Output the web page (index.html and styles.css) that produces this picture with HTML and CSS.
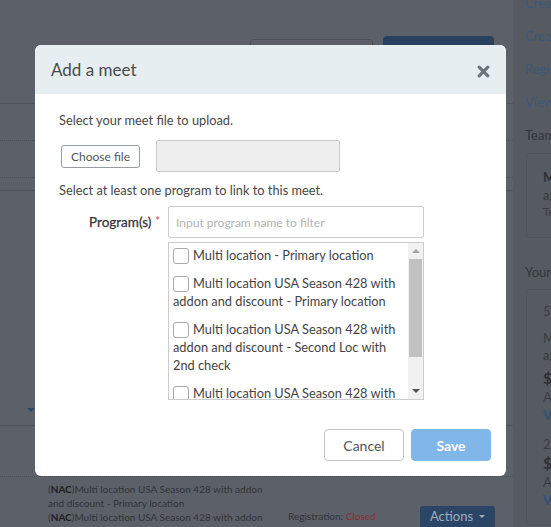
FILE: index.html
```html
<!DOCTYPE html>
<html lang="en">
<head>
<meta charset="utf-8">
<title>Add a meet</title>
<link rel="stylesheet" href="styles.css">
</head>
<body>
<div class="page">
  <main class="main">
    <div class="toolbar">
      <span class="bg-btn-outline"></span>
      <span class="bg-btn-primary"></span>
    </div>
    <div class="row row-a"></div>
    <div class="row row-b"></div>
    <div class="row row-c"></div>
    <div class="row row-d"><span class="bg-caret"></span></div>
    <div class="row row-e"></div>
    <div class="meets">
      <div class="meet-names">
        <p class="meet-name">(<b>NAC</b>)Multi location USA Season 428 with addon and discount - Primary location</p>
        <p class="meet-name">(<b>NAC</b>)Multi location USA Season 428 with addon and discount - Second Loc with 2nd check</p>
      </div>
      <div class="meet-status">Registration: <span class="closed">Closed</span><br>Billing: 4/28/2019</div>
      <div class="bg-actions">Actions <span class="bg-actions-caret"></span></div>
    </div>
  </main>
  <aside class="sidebar">
    <ul class="side-links">
      <li>Create meet</li>
      <li>Create team</li>
      <li>Register swimmers</li>
      <li>View all meets</li>
    </ul>
    <div class="side-title">Team(s)</div>
    <div class="side-card card-team">
      <div class="st-bold">Multi location</div>
      <div class="st-line">age group swim team</div>
      <div class="st-small">Team code: MLT</div>
    </div>
    <div class="side-title side-title-2">Your registrations</div>
    <div class="side-card card-reg">
      <div class="sr-date">5/1/2019</div>
      <div class="sr-line">Multi location USA Season</div>
      <div class="sr-line">age group meet</div>
      <div class="sr-amount">$150.00</div>
      <div class="sr-muted">Amount due</div>
      <div class="sr-link">View</div>
      <div class="sr-date sr-date-2">2nd session</div>
      <div class="sr-amount sr-amount-2">$100.00</div>
      <div class="sr-muted">Amount due</div>
      <div class="sr-link">View</div>
    </div>
  </aside>
</div>

<div class="modal" role="dialog" aria-label="Add a meet">
  <div class="modal-header">
    <h2 class="modal-title">Add a meet</h2>
    <button class="close" aria-label="Close">
      <svg width="13" height="13" viewBox="0 0 13 13"><path d="M2.2 2.2L10.8 10.8M10.8 2.2L2.2 10.8" stroke="#6e757a" stroke-width="3.2" stroke-linecap="round"/></svg>
    </button>
  </div>
  <div class="modal-body">
    <p class="hint">Select your meet file to upload.</p>
    <div class="file-row">
      <button class="choose">Choose file</button>
      <div class="file-name"></div>
    </div>
    <p class="hint hint-2">Select at least one program to link to this meet.</p>
    <div class="form-group">
      <label class="label">Program(s) <span class="req">*</span></label>
      <div class="field">
        <input class="filter" type="text" placeholder="Input program name to filter">
        <div class="list">
          <div class="items">
            <div class="item"><span class="cb"></span>Multi location - Primary location</div>
            <div class="item"><span class="cb"></span>Multi location USA Season 428 with addon and discount - Primary location</div>
            <div class="item"><span class="cb"></span>Multi location USA Season 428 with addon and discount - Second Loc with 2nd check</div>
            <div class="item"><span class="cb"></span>Multi location USA Season 428 with addon and discount - Third location</div>
          </div>
          <div class="scrollbar">
            <span class="sb-arrow"><span class="tri-up"></span></span>
            <span class="sb-thumb"></span>
            <span class="sb-space"></span>
            <span class="sb-arrow"><span class="tri-down"></span></span>
          </div>
        </div>
      </div>
    </div>
  </div>
  <div class="modal-footer">
    <button class="btn btn-cancel">Cancel</button>
    <button class="btn btn-save">Save</button>
  </div>
</div>
</body>
</html>
```

FILE: styles.css
```css
* { box-sizing: border-box; }
html, body { margin: 0; padding: 0; overflow: hidden; }
body {
  width: 551px;
  height: 527px;
  position: relative;
  background: #5c6068;
  font-family: "Lato", "Liberation Sans", sans-serif;
}
p { margin: 0; }

/* ---------- dimmed page behind the dialog ---------- */
.page { display: flex; width: 551px; height: 527px; overflow: hidden; }
.main { width: 513px; flex: none; background: #5c6068; }
.toolbar {
  height: 104px;
  display: flex;
  justify-content: flex-end;
  align-items: flex-start;
  gap: 10px;
  padding: 36px 19px 0 0;
  border-bottom: 1px solid #50545b;
}
.bg-btn-outline {
  width: 123px; height: 36px; margin-top: 3px;
  border: 1px solid #4a4e55; border-radius: 3px;
}
.bg-btn-primary {
  width: 111px; height: 40px;
  background: #28415f; border-radius: 4px;
}
.row { border-bottom: 1px dotted #4b4f56; }
.row-a { height: 37px; }
.row-b { height: 37px; }
.row-c { height: 13px; border-bottom-style: solid; border-bottom-color: #50545b; }
.row-d {
  height: 235px;
  border-bottom-style: solid; border-bottom-color: #50545b;
  display: flex; align-items: flex-end;
  padding: 0 0 13px 27px;
}
.bg-caret {
  width: 0; height: 0;
  border-left: 4px solid transparent;
  border-right: 4px solid transparent;
  border-top: 4px solid #2c4a6c;
}
.row-e { height: 51px; }
.meets { display: flex; align-items: flex-start; height: 50px; overflow: hidden; }
.meet-names {
  width: 288px; flex: none;
  padding: 5px 18px 0 48px;
  font-size: 10px; line-height: 14px; color: #30333a;
}
.meet-names b { color: #1e2024; }
.meet-status {
  width: 132px; flex: none;
  margin-top: 32px;
  font-size: 10px; line-height: 14px; color: #30333a;
}
.closed { color: #8a2f30; }
.bg-actions {
  margin-top: 29px;
  width: 75px; height: 30px;
  background: #2b4566; border-radius: 3px;
  color: #9eacbc; font-size: 13px; line-height: 14px;
  display: flex; align-items: flex-start; justify-content: center; gap: 6px;
  padding-top: 3px;
}
.bg-actions-caret {
  width: 0; height: 0; margin-top: 6px;
  border-left: 3px solid transparent;
  border-right: 3px solid transparent;
  border-top: 3px solid #9eacbc;
}

.sidebar {
  flex: 1;
  min-width: 0;
  overflow: hidden;
  white-space: nowrap;
  background: #565a61;
  padding-left: 12px;
  font-size: 13px;
}
.side-links { list-style: none; margin: -5px 0 0; padding: 0; }
.side-links li { height: 16px; line-height: 16px; margin-bottom: 17px; color: #3d5879; }
.side-title { line-height: 16px; color: #33363c; font-size: 13px; }
.side-card {
  margin-left: 1px;
  width: 220px;
  border: 1px solid #4f535a;
  border-radius: 3px;
  padding-left: 16px;
}
.card-team { margin-top: 10px; height: 85px; padding-top: 14px; }
.st-bold { line-height: 18px; font-weight: 700; color: #2d3035; }
.st-line { line-height: 18px; color: #383b41; }
.st-small { line-height: 16px; font-size: 11px; color: #3a3d43; }
.side-title-2 { margin-top: 26px; }
.card-reg { margin-top: 9px; height: 236px; padding-top: 13px; }
.sr-date { line-height: 16px; color: #3a3d43; margin-bottom: 11px; }
.sr-date-2 { margin-top: 12px; margin-bottom: 1px; }
.sr-line { line-height: 17px; color: #383b41; }
.sr-amount { line-height: 20px; font-size: 16px; font-weight: 700; color: #2d3035; margin-top: 4px; }
.sr-amount-2 { margin-top: 0; }
.sr-muted { line-height: 18px; color: #3a3d43; }
.sr-link { line-height: 18px; color: #33507a; font-weight: 700; }

/* ---------- dialog ---------- */
.modal {
  position: absolute;
  left: 35px;
  top: 45px;
  width: 471px;
  background: #ffffff;
  border-radius: 6px;
  overflow: hidden;
}
.modal-header {
  height: 49px;
  background: #e7eef2;
  display: flex;
  align-items: center;
  justify-content: space-between;
  padding: 0 16px;
}
.modal-title {
  margin: 0;
  font-size: 17px;
  font-weight: 400;
  color: #4a4a4a;
}
.close {
  border: 0; background: none; padding: 0; margin-top: 3px;
  width: 13px; height: 13px; display: block;
}
.close svg { display: block; }
.modal-body { padding: 18px 24px 0; }
.hint { font-size: 12.8px; line-height: 16px; color: #474747; }
.file-row {
  margin-top: 12px;
  display: flex;
  align-items: center;
  gap: 16px;
  padding-left: 2px;
}
.choose {
  width: 79px; height: 23px;
  background: #fff;
  border: 1px solid #979da1;
  border-radius: 3px;
  font-family: inherit;
  font-size: 12px;
  color: #555;
  padding: 0;
}
.file-name {
  width: 184px; height: 32px;
  background: #eeeeee;
  border: 1px solid #c9c9c9;
  border-radius: 2px;
}
.hint-2 { margin-top: 10px; }
.form-group {
  margin-top: 8px;
  display: flex;
  align-items: flex-start;
  gap: 8px;
}
.label {
  width: 101px; flex: none;
  height: 32px; line-height: 32px;
  text-align: right;
  font-size: 13.5px;
  font-weight: 400;
  color: #333;
  -webkit-text-stroke: 0.25px #333;
}
.req { color: #d4463f; font-size: 12px; position: relative; top: -2px; -webkit-text-stroke: 0; }
.field { width: 256px; }
.filter {
  display: block;
  width: 256px; height: 32px;
  border: 1px solid #cccccc;
  border-radius: 2px;
  padding: 0 7px;
  font-family: inherit;
  font-size: 12px;
  color: #333;
}
.filter::placeholder { color: #b3b3b3; }
.list {
  margin-top: 4px;
  height: 158px;
  border: 1px solid #cccccc;
  display: flex;
}
.items {
  flex: 1;
  min-width: 0;
  overflow: hidden;
  padding: 3px 8px 0 4px;
  font-size: 12.8px;
  line-height: 18px;
  color: #444;
}
.item { margin-bottom: 10px; }
.cb {
  display: inline-block;
  vertical-align: top;
  width: 16px; height: 16px;
  margin: 2px 4px 0 0;
  border: 1px solid #a9a9a9;
  border-radius: 3px;
  background: #fff;
}
.scrollbar {
  width: 15px; flex: none;
  background: #f1f1f1;
  display: flex;
  flex-direction: column;
}
.sb-arrow { height: 16px; display: flex; align-items: center; justify-content: center; }
.tri-up {
  width: 0; height: 0;
  border-left: 4px solid transparent;
  border-right: 4px solid transparent;
  border-bottom: 4px solid #a3a3a3;
}
.tri-down {
  width: 0; height: 0;
  border-left: 4px solid transparent;
  border-right: 4px solid transparent;
  border-top: 4px solid #505050;
}
.sb-thumb { height: 98px; margin: 0 1px; background: #c1c1c1; }
.sb-space { flex: 1; }
.modal-footer {
  display: flex;
  justify-content: flex-end;
  gap: 7px;
  padding: 29px 15px 15px;
}
.btn {
  width: 80px; height: 32px;
  border-radius: 4px;
  font-family: inherit;
  font-size: 14px;
  padding: 0;
}
.btn-cancel { background: #fff; border: 1px solid #c4c4c4; color: #555; }
.btn-save { background: #80b6e8; border: 1px solid #80b6e8; color: #fff; font-weight: 700; }
```
